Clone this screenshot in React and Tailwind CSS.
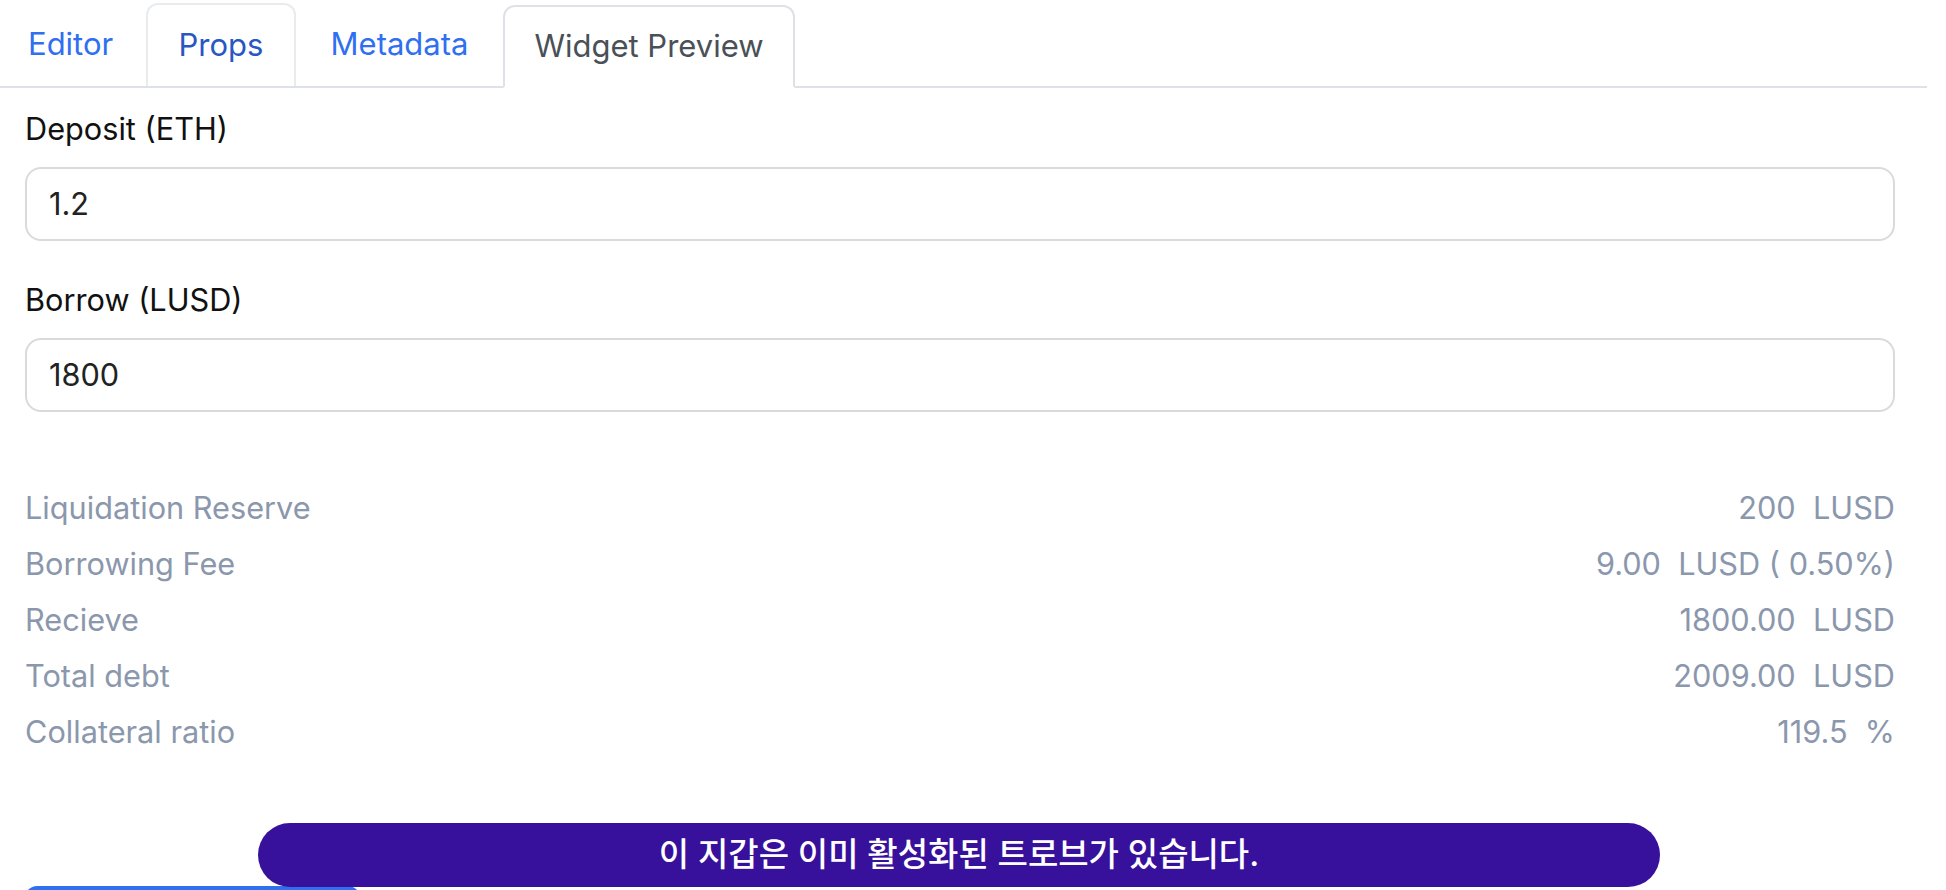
const tabs = [
  { label: "Editor", w: "w-[146px] justify-start pl-[26px]", state: "link" },
  { label: "Props", w: "w-[150px] justify-center", state: "hover" },
  { label: "Metadata", w: "w-[207px] justify-center", state: "link" },
  { label: "Widget Preview", w: "w-[292px] justify-center", state: "active" },
];

const stats = [
  ["Liquidation Reserve", "200  LUSD"],
  ["Borrowing Fee", "9.00  LUSD ( 0.50%)"],
  ["Recieve", "1800.00  LUSD"],
  ["Total debt", "2009.00  LUSD"],
  ["Collateral ratio", "119.5  %"],
];

const Tab = ({ tab }) => {
  let cls = "border-2 border-transparent text-[#2f6ff0]";
  if (tab.state === "hover") cls = "border-2 border-b-0 border-[#e9ecef] text-[#2857c2]";
  if (tab.state === "active")
    cls = "border-2 border-[#dee2e6] border-b-white bg-white text-[#495057] -mb-[2px]";
  return (
    <div className={`flex h-[83px] items-center rounded-t-[12px] text-[31px] ${tab.w} ${cls}`}>
      {tab.label}
    </div>
  );
};

const Field = ({ label, value, className = "" }) => (
  <div className={className}>
    <div className="h-[45px] leading-[45px] text-[#111]">{label}</div>
    <div className="mt-[16px] flex h-[74px] items-center rounded-[16px] border-2 border-[#dadada] px-[22px] text-[#222]">
      {value}
    </div>
  </div>
);

export default function App() {
  return (
    <div
      className="relative h-[890px] w-[1946px] overflow-hidden bg-white text-[30.7px]"
      style={{ fontFamily: "Inter, 'Noto Sans CJK KR', sans-serif" }}
    >
      <div className="flex w-[1927px] items-end border-b-2 border-[#dee2e6] pt-[3px]">
        {tabs.map((t) => (
          <Tab key={t.label} tab={t} />
        ))}
      </div>

      <div className="w-[1920px] px-[25px]">
        <Field label="Deposit (ETH)" value="1.2" className="mt-[18px]" />
        <Field label="Borrow (LUSD)" value="1800" className="mt-[36px]" />

        <div className="mt-[68px]">
          {stats.map(([k, v]) => (
            <div key={k} className="flex h-[56px] items-center justify-between text-[#8b97ac]">
              <span>{k}</span>
              <span className="whitespace-pre">{v}</span>
            </div>
          ))}
        </div>

        <div className="mt-[126px] h-[60px] w-[335px] rounded-[12px] bg-[#3070ee]" />
      </div>

      <div className="absolute left-[258px] top-[823px] flex h-[64px] w-[1402px] items-center justify-center rounded-full bg-[#37109b] text-[33px] font-medium text-white">
        이 지갑은 이미 활성화된 트로브가 있습니다.
      </div>
    </div>
  );
}
